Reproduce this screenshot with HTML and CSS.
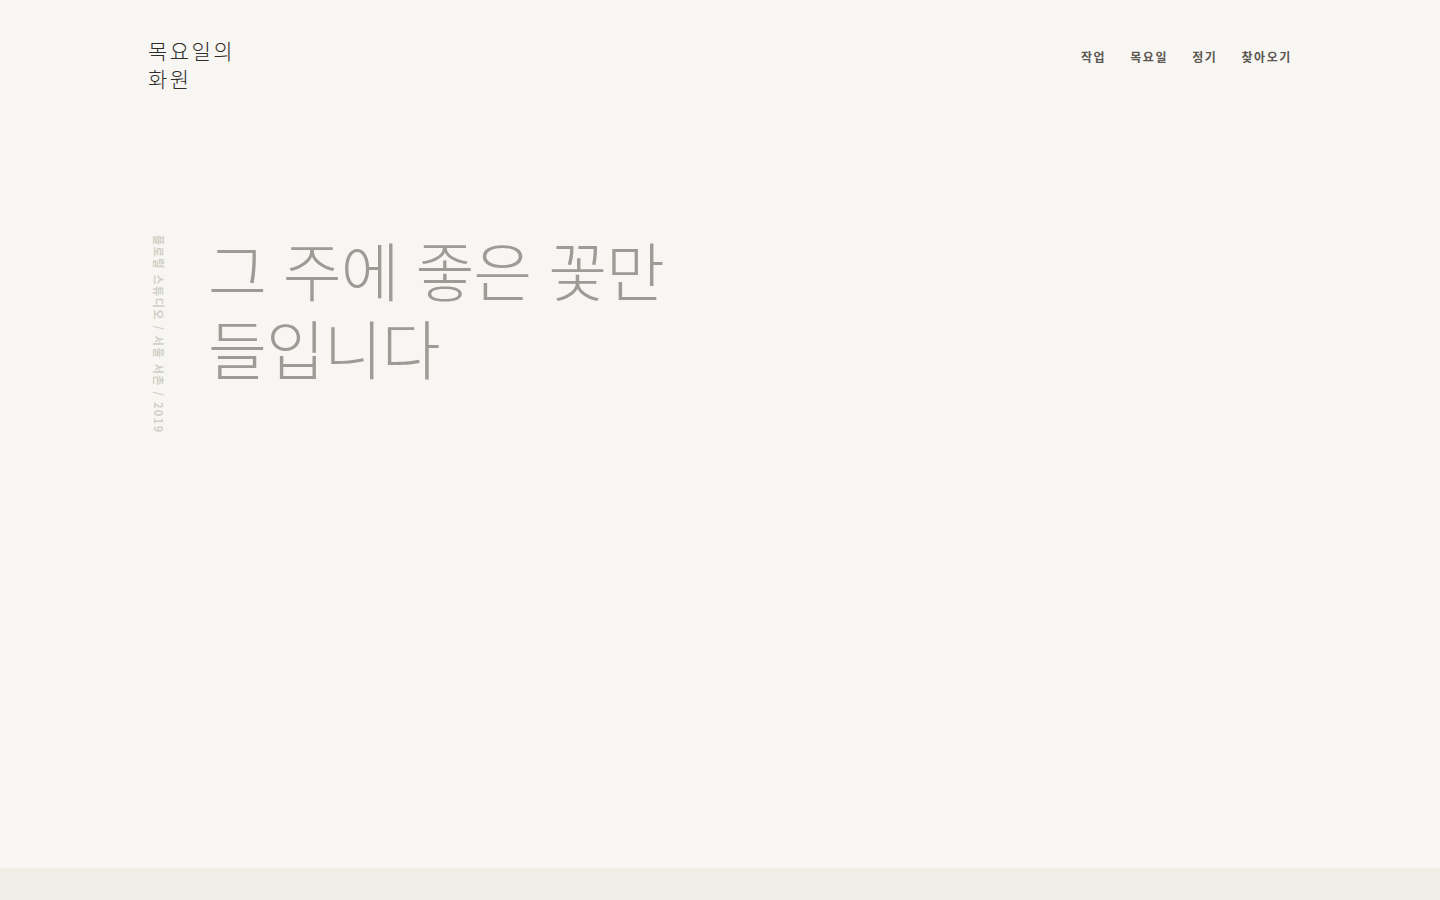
FILE: index.html
```html
<!DOCTYPE html>
<html lang="ko">
<head>
<meta charset="utf-8">
<title>목요일의 화원</title>
<link rel="stylesheet" href="styles.css">
</head>
<body>
<div class="page">
  <header class="header">
    <a class="logo" href="#">목요일의<br>화원</a>
    <nav class="nav">
      <a href="#">작업</a>
      <a href="#">목요일</a>
      <a href="#">정기</a>
      <a href="#">찾아오기</a>
    </nav>
  </header>
  <main class="hero">
    <p class="side">플로럴 스튜디오 / 서울 서촌 / 2019</p>
    <h1 class="title">그 주에 좋은 꽃만<br>들입니다</h1>
  </main>
</div>
<footer class="band"></footer>
</body>
</html>
```

FILE: styles.css
```css
* { box-sizing: border-box; }
html, body { margin: 0; padding: 0; }
body {
  background: #f7f6f2;
  font-family: "Noto Sans CJK KR", "Noto Sans", sans-serif;
  color: #333;
  min-height: 900px;
  display: flex;
  flex-direction: column;
}
a { color: inherit; text-decoration: none; }
.page {
  flex: 1;
  width: 1144px;
  margin: 0 auto;
}
.header {
  display: flex;
  justify-content: space-between;
  align-items: flex-start;
  padding-top: 36px;
}
.logo {
  font-size: 21px;
  font-weight: 300;
  line-height: 28px;
  letter-spacing: 2.4px;
  color: #2e2c2a;
}
.nav {
  display: flex;
  gap: 24px;
  padding-top: 12px;
}
.nav a {
  font-size: 12px;
  font-weight: 700;
  letter-spacing: 1.6px;
  line-height: 18px;
  color: #5b5651;
}
.hero {
  display: flex;
  align-items: flex-start;
  gap: 41px;
  padding-top: 143px;
}
.side {
  margin: 0;
  writing-mode: vertical-rl;
  text-orientation: sideways;
  font-size: 11px;
  font-weight: 700;
  letter-spacing: 1.5px;
  line-height: 16px;
  color: #d2cec6;
  padding-left: 3px;
}
.title {
  margin: -6px 0 0;
  font-size: 64px;
  font-weight: 300;
  line-height: 78px;
  letter-spacing: -1px;
  color: #9d9b96;
}
.band {
  height: 32px;
  background: #f0ece6;
}
```
